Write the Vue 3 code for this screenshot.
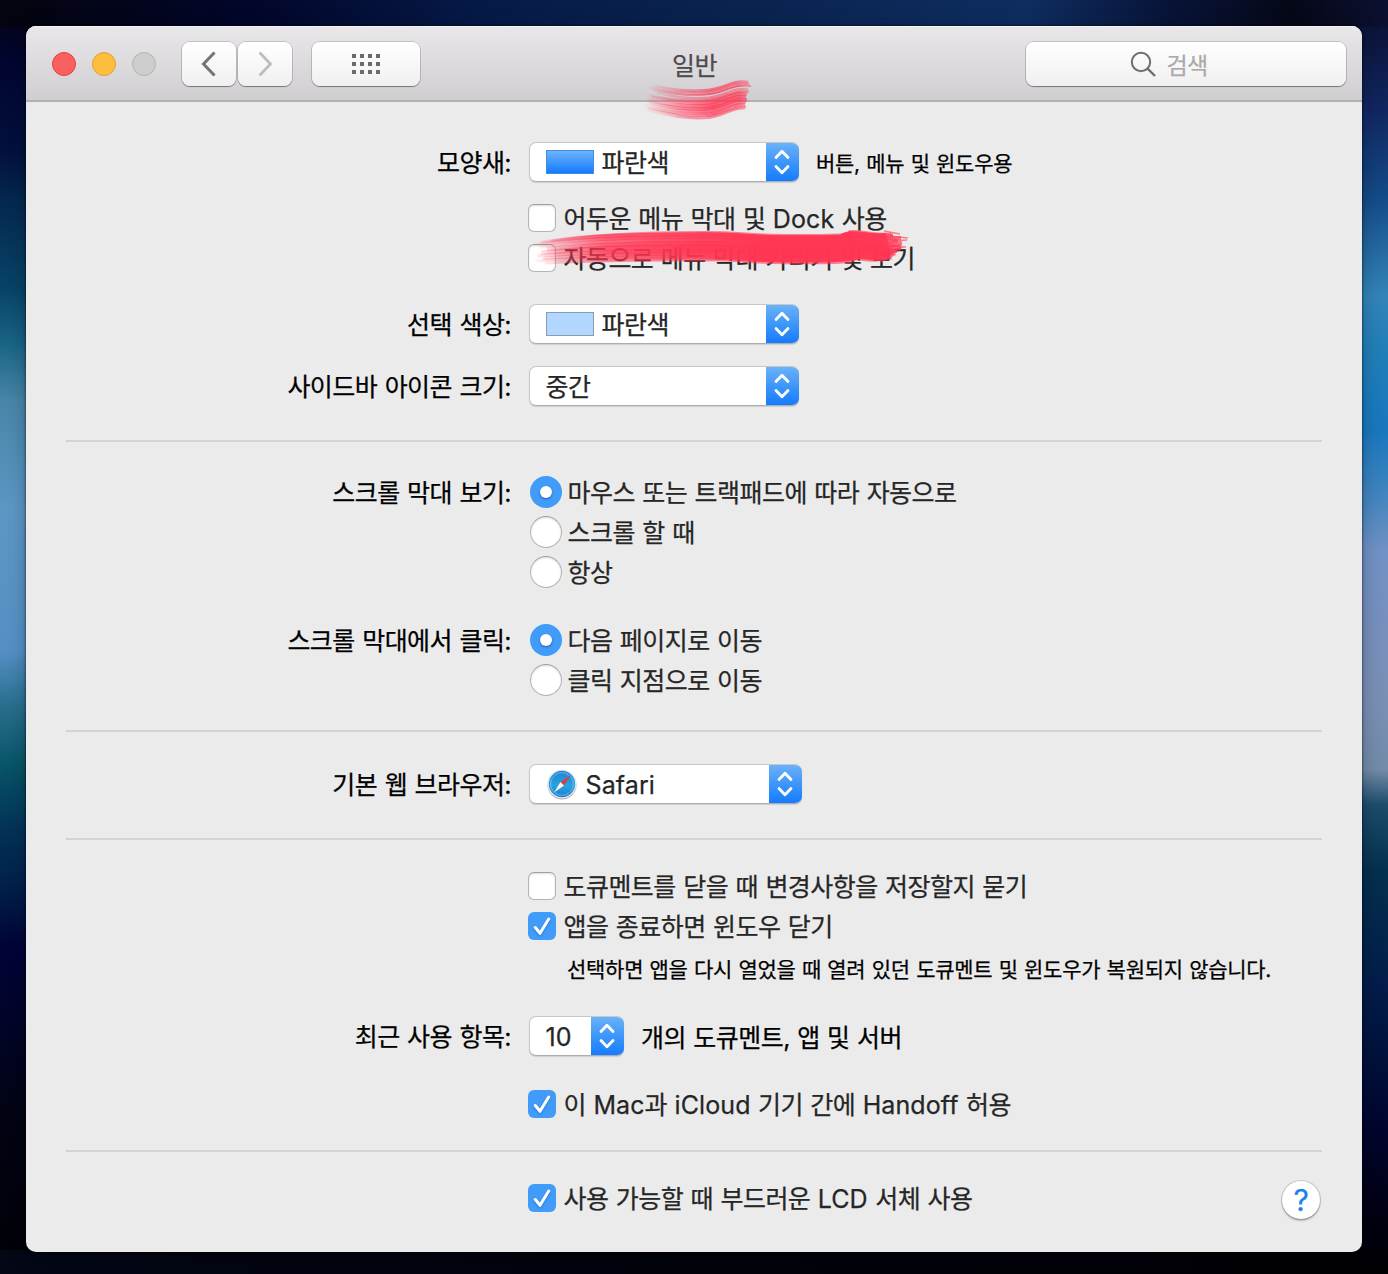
<script setup>
const rows = [
  { gap: 40, label: '모양새:', kind: 'select', width: 270, swatch: 'accent', value: '파란색', hint: '버튼, 메뉴 및 윈도우용' },
  { gap: 16, kind: 'check', text: '어두운 메뉴 막대 및 Dock 사용' },
  { gap: 0, kind: 'check', text: '자동으로 메뉴 막대 가리기 및 보기' },
  { gap: 26, label: '선택 색상:', kind: 'select', width: 270, swatch: 'light', value: '파란색' },
  { gap: 22, label: '사이드바 아이콘 크기:', kind: 'select', width: 270, value: '중간' },
  { gap: 34, kind: 'line' },
  { gap: 30, label: '스크롤 막대 보기:', kind: 'radio', on: true, text: '마우스 또는 트랙패드에 따라 자동으로' },
  { gap: 0, kind: 'radio', text: '스크롤 할 때' },
  { gap: 0, kind: 'radio', text: '항상' },
  { gap: 28, label: '스크롤 막대에서 클릭:', kind: 'radio', on: true, text: '다음 페이지로 이동' },
  { gap: 0, kind: 'radio', text: '클릭 지점으로 이동' },
  { gap: 30, kind: 'line' },
  { gap: 32, label: '기본 웹 브라우저:', kind: 'select', width: 273, safari: true, value: 'Safari' },
  { gap: 34, kind: 'line' },
  { gap: 26, kind: 'check', text: '도큐멘트를 닫을 때 변경사항을 저장할지 묻기' },
  { gap: 0, kind: 'check', on: true, text: '앱을 종료하면 윈도우 닫기' },
  { gap: 4, kind: 'note', text: '선택하면 앱을 다시 열었을 때 열려 있던 도큐멘트 및 윈도우가 복원되지 않습니다.' },
  { gap: 26, label: '최근 사용 항목:', kind: 'select', width: 95, value: '10', suffix: '개의 도큐멘트, 앱 및 서버' },
  { gap: 28, kind: 'check', on: true, text: '이 Mac과 iCloud 기기 간에 Handoff 허용' },
  { gap: 26, kind: 'line' },
  { gap: 26, kind: 'check', on: true, text: '사용 가능할 때 부드러운 LCD 서체 사용' },
]

// Latin words and numbers are set a little wider than the Hangul around them
const runs = (text) => text.split(/([A-Za-z0-9]+)/).filter(Boolean)
const isLatin = (run) => /^[A-Za-z0-9]+$/.test(run)

const dots = Array.from({ length: 12 }, (_, i) => ({ x: (i % 4) * 8, y: Math.floor(i / 4) * 8 }))
const ticks = Array.from({ length: 36 }, (_, i) => i * 10)

// Bristles of the two brush marks: vertical offset, start and end shift, width, opacity
const shortBristles = [
  [-14, 12, -2, 2.2, 0.6], [-12, 6, -1, 2.6, 0.65], [-9.5, 10, 1, 2, 0.8], [-6, 14, -2, 2.4, 0.5],
  [-3.5, 4, -1, 2.4, 0.7], [-1, 8, -3, 3.4, 0.75], [2, 3, -4, 3.8, 0.8], [5, 6, -3, 3.4, 0.85],
  [7.5, 2, -4, 2.8, 0.7], [10, 0, -5, 2.8, 0.75], [12.5, 5, -4, 2.2, 0.75], [14.5, 3, -5, 1.6, 0.55],
]
const longBristles = [
  [-14, 22, -12, 2, 0.6], [-12, 12, -10, 3.5, 0.8], [-9, 4, -2, 4, 0.85], [-6, 10, -5, 3, 0.7],
  [-3, 18, -1, 4.5, 0.85], [1, 12, -2, 5, 0.9], [5, 8, -6, 4, 0.9], [8, 14, -9, 3.5, 0.8],
  [11, 6, -14, 3.6, 0.75], [14, 16, -20, 2.4, 0.6],
]
const shortPath = ([dy, a, b]) =>
  `M${643 + a} ${98 + dy * 0.85} C${664 + a} ${102 + dy * 0.9} 682 ${105 + dy} 704 ${104 + dy} S730 ${93 + dy} ${750 + b} ${95 + dy * 0.95}`
const longPath = ([dy, a, b]) =>
  `M${529 + a} ${252 + dy * 0.8} C${575 + a} ${247 + dy} 660 ${246 + dy} 704 ${246 + dy} S750 ${250 + dy} 815 ${249 + dy} S838 ${245 + dy} 852 ${245 + dy} S876 ${249 + dy} ${903 + b} ${246 + dy * 0.9}`
</script>

<template>
  <div class="desktop">
    <main class="window">
      <header class="titlebar">
        <div class="lights"><i class="red"></i><i class="amber"></i><i class="gray"></i></div>
        <div class="nav">
          <button class="tool"><svg width="20" height="28" viewBox="0 0 20 28"><path d="M14.500 3.500 4.500 14l10 10.500" fill="none" stroke="#737373" stroke-width="3" stroke-linecap="square" /></svg></button>
          <button class="tool"><svg width="20" height="28" viewBox="0 0 20 28"><path d="M5.500 3.500l10 10.500-10 10.500" fill="none" stroke="#bdbdbd" stroke-width="2.800" stroke-linecap="square" /></svg></button>
        </div>
        <button class="tool grid-button">
          <svg width="28" height="20" viewBox="0 0 28 20"><rect v-for="(d, i) in dots" :key="i" :x="d.x" :y="d.y" width="4" height="4" fill="#6a6a6a" /></svg>
        </button>
        <h1>일반</h1>
        <div class="search">
          <svg width="27" height="27" viewBox="0 0 27 27" fill="none" stroke="#6d6d6d" stroke-width="2"><circle cx="11" cy="11" r="9.200" /><path d="M17.500 17.500l7.500 7.500" stroke-width="2.400" /></svg>
          <span>검색</span>
        </div>
      </header>

      <section class="form">
        <template v-for="(r, i) in rows" :key="i">
          <hr v-if="r.kind === 'line'" :style="{ marginTop: r.gap + 'px' }">
          <div v-else class="row" :style="{ marginTop: r.gap + 'px' }">
            <span class="label">{{ r.label }}</span>

            <template v-if="r.kind === 'select'">
              <div class="select" :style="{ width: r.width + 'px' }">
                <div class="value">
                  <i v-if="r.swatch" class="swatch" :class="r.swatch"></i>
                  <svg v-if="r.safari" class="safari" width="32" height="32" viewBox="0 0 32 32">
                    <defs><linearGradient id="sea" x2="0" y2="1"><stop stop-color="#2080d4" /><stop offset=".55" stop-color="#25a5e0" /><stop offset="1" stop-color="#1f7ad4" /></linearGradient></defs>
                    <circle cx="16" cy="17" r="14.500" fill="#aeb1b4" />
                    <circle cx="16" cy="16" r="14.500" fill="#e6e8ea" />
                    <circle cx="16" cy="16" r="13.200" fill="url(#sea)" />
                    <path v-for="t in ticks" :key="t" d="M16 3.800v1.600" stroke="#a9d6f2" stroke-width=".7" :transform="`rotate(${t} 16 16)`" />
                    <path d="M24.500 7.500 14.500 14 18 17.500z" fill="#e5383c" />
                    <path d="M8 24.500 14.500 14 18 17.500z" fill="#f4f7f8" />
                  </svg>
                  <span :class="{ latin: isLatin(r.value) }">{{ r.value }}</span>
                </div>
                <div class="arrows">
                  <svg width="16" height="26" viewBox="0 0 16 26" fill="none" stroke="#fff" stroke-width="2.800" stroke-linecap="round" stroke-linejoin="round"><path d="M2 8.500 8 2.200l6 6.300M2 17.500l6 6.300 6-6.300" /></svg>
                </div>
              </div>
              <span v-if="r.hint" class="hint">{{ r.hint }}</span>
              <span v-if="r.suffix" class="suffix">{{ r.suffix }}</span>
            </template>

            <label v-else-if="r.kind === 'check'" class="option">
              <i class="box" :class="{ on: r.on }">
                <svg v-if="r.on" width="28" height="28" viewBox="0 0 28 28" fill="none" stroke="#fff" stroke-width="3" stroke-linecap="round" stroke-linejoin="round"><path d="M7.300 15.500l4.700 5.800L20.700 7" /></svg>
              </i>
              <span><span v-for="(run, n) in runs(r.text)" :key="n" :class="{ latin: isLatin(run) }">{{ run }}</span></span>
            </label>

            <label v-else-if="r.kind === 'radio'" class="option">
              <i class="dot" :class="{ on: r.on }"></i>
              <span>{{ r.text }}</span>
            </label>

            <p v-else class="note">{{ r.text }}</p>

            <button v-if="i === rows.length - 1" class="help">?</button>
          </div>
        </template>
      </section>
    </main>

    <svg class="marks" width="1388" height="300" viewBox="0 0 1388 300" fill="none">
      <defs>
        <linearGradient id="fadeShort" gradientUnits="userSpaceOnUse" x1="643" x2="750" y1="0" y2="0"><stop stop-color="#ff3a58" stop-opacity="0" /><stop offset=".35" stop-color="#ff3a58" stop-opacity=".65" /><stop offset=".65" stop-color="#ff3553" /><stop offset=".9" stop-color="#ff3553" stop-opacity=".9" /><stop offset="1" stop-color="#ff3553" stop-opacity=".5" /></linearGradient>
        <linearGradient id="fadeLong" gradientUnits="userSpaceOnUse" x1="530" x2="910" y1="0" y2="0"><stop stop-color="#ff3553" stop-opacity="0" /><stop offset=".08" stop-color="#ff3553" stop-opacity=".4" /><stop offset=".2" stop-color="#ff3552" stop-opacity=".85" /><stop offset=".45" stop-color="#ff3552" /><stop offset=".95" stop-color="#ff3552" /><stop offset="1" stop-color="#ff3552" stop-opacity=".6" /></linearGradient>
        <linearGradient id="core" gradientUnits="userSpaceOnUse" x1="560" x2="900" y1="0" y2="0"><stop stop-color="#ff3552" stop-opacity="0" /><stop offset=".35" stop-color="#ff3552" stop-opacity=".55" /><stop offset=".6" stop-color="#ff3552" stop-opacity=".95" /><stop offset=".95" stop-color="#ff3552" stop-opacity=".9" /><stop offset="1" stop-color="#ff3552" stop-opacity=".5" /></linearGradient>
      </defs>
      <g class="soft">
        <path v-for="(b, i) in shortBristles" :key="'s' + i" :d="shortPath(b)" stroke="url(#fadeShort)" :stroke-width="b[3]" :opacity="b[4]" />
        <path :d="longPath([0, 12, -14])" stroke="url(#core)" stroke-width="27" />
        <path v-for="(b, i) in longBristles" :key="'l' + i" :d="longPath(b)" stroke="url(#fadeLong)" :stroke-width="b[3]" :opacity="b[4]" />
        <path d="M884 231l16 3M890 236l18 2M892 241l15-1M890 246l16 1M888 252l15-5M886 257l15-8M880 262l16-8" stroke="#ff3552" stroke-width="1.600" opacity=".6" />
      </g>
    </svg>
  </div>
</template>

<style>
body { margin: 0; background: #02030d; }
</style>

<style scoped>
* { box-sizing: border-box; }
.desktop {
  position: relative;
  width: 1388px;
  height: 1274px;
  padding: 26px;
  overflow: hidden;
  font: 25px/40px Inter, "Noto Sans CJK KR", sans-serif;
  letter-spacing: -0.55px;
  word-spacing: 0.95px;
  font-variant-ligatures: none;
  -webkit-text-stroke: 0.25px currentColor;
  color: #262626;
  background:
    linear-gradient(90deg, #04040e, #02062a 18%, #061a48 35%, #0a2450 55%, #0e2d60 74%, #081438 84%, #060818 93%, #0b1030) 0 0 / 100% 27px no-repeat,
    linear-gradient(90deg, #030716, #02040d 40%, #010105) 0 100% / 100% 24px no-repeat,
    linear-gradient(#04040e, #020530 60px, #02103d 150px, #04284f 200px, #084468 290px, #1a6585 345px, #4885a8 400px, #5c97c5 510px, #5590c5 650px, #29708f 705px, #085468 765px, #033258 830px, #021e4a 890px, #010438 945px, #020415 1110px, #010106) 0 0 / 50% 100% no-repeat,
    linear-gradient(#0a0e2a, #112661 110px, #144c88 200px, #3384b7 295px, #207fb8 350px, #1877bd 430px, #4586c0 500px, #7191c5 550px, #7b8fb5 700px, #718ba8 770px, #1c4c6b 805px, #04304f 870px, #021c49 990px, #01052e 1130px, #01010d 1230px) 100% 0 / 50% 100% no-repeat;
}
.window {
  height: 1226px;
  border-radius: 10px;
  overflow: hidden;
  background: #ebebeb;
  box-shadow: 0 0 3px rgba(0, 0, 0, .75), 0 4px 20px rgba(0, 0, 0, .25);
}
.titlebar {
  display: flex;
  align-items: center;
  height: 76px;
  padding: 2px 16px 0 26px;
  background: linear-gradient(#e9e7ea, #d1ced2);
  border-bottom: 2px solid #b3b0b4;
  box-shadow: inset 0 1px #f5f4f5;
}
.lights { display: flex; gap: 16px; }
.lights i { width: 24px; height: 24px; border-radius: 50%; border: 1px solid transparent; }
.lights .red { background: #fc605c; border-color: #e2443f; }
.lights .amber { background: #fdbd3e; border-color: #dfa033; }
.lights .gray { background: #cdcdcd; border-color: #b3b3b3; }
button { padding: 0; font: inherit; letter-spacing: inherit; }
.nav { display: flex; gap: 2px; margin: 0 20px 0 26px; }
.tool, .search {
  display: flex;
  align-items: center;
  justify-content: center;
  width: 54px;
  height: 44px;
  border: 0;
  border-radius: 8px;
  background: linear-gradient(#fff, #f1f0f1);
  box-shadow: 0 0 0 1px rgba(0, 0, 0, .14), 0 1px 1px rgba(0, 0, 0, .35);
}
.tool.grid-button { width: 108px; }
h1 {
  margin: 0 auto 0 0;
  padding: 4px 0 0 252px;
  font-size: 25px;
  font-weight: 400;
  color: #4c4c4c;
}
.search { width: 320px; gap: 9px; padding-right: 36px; color: #aaa; font-size: 23px; }
.search { padding-right: 35px; }
.search svg { margin-left: 1px; }
.search span { padding-top: 3px; }
.form { padding: 0 40px; }
hr { height: 2px; margin: 0; border: 0; background: #d4d4d4; }
.row { display: flex; align-items: center; height: 40px; white-space: nowrap; }
.label { width: 445px; margin-right: 18px; padding-top: 1px; text-align: right; color: #000; }
.latin { letter-spacing: 0.1px; }
.select {
  display: flex;
  height: 40px;
  border-radius: 7px;
  overflow: hidden;
  background: #fff;
  border: 1px solid #c7c7c7;
  border-bottom-color: #adadad;
  border-right: 0;
  box-shadow: 0 1px 1px rgba(0, 0, 0, .12);
}
.value { flex: 1; display: flex; align-items: center; padding-left: 16px; height: 38px; }
.value span { padding-top: 1px; margin-left: -0.5px; }
.swatch { width: 48px; height: 24px; margin-right: 8px; border: 1px solid #8a9cb0; background: #b2d7ff; }
.accent { border-color: #3d8ee5; background: linear-gradient(#6cb3fa, #147bff); }
.safari { margin-right: 8px; }
.arrows {
  display: flex;
  align-items: center;
  justify-content: center;
  width: 33px;
  height: 40px;
  margin-top: -1px;
  padding-right: 1px;
  background: linear-gradient(#6db3f9, #3f97f9 50%, #157bff);
  border-bottom: 1px solid #1668de;
}
.hint { margin-left: 17px; padding-top: 3px; font-size: 21px; letter-spacing: -0.27px; word-spacing: 0.7px; color: #000; }
.suffix { margin-left: 17px; padding-top: 4px; color: #000; }
.option { display: flex; align-items: center; }
.option > span { padding-top: 1px; margin-left: -0.5px; }
.box, .dot { flex: none; background: #fff; border: 1px solid #b5b5b5; border-top-color: #9f9f9f; box-shadow: inset 0 1px 2px rgba(0, 0, 0, .14); }
.box { width: 28px; height: 28px; margin: 0 8px 0 -1px; border-radius: 6px; }
.dot { display: flex; align-items: center; justify-content: center; width: 32px; height: 32px; margin: 0 6px 0 1px; border-radius: 50%; }
.box.on, .dot.on { border: 0; background: #419bf9; box-shadow: none; }
.box.on svg { display: block; filter: drop-shadow(0 1px 1px rgba(0, 60, 140, .4)); }
.dot.on::after { content: ""; width: 12px; height: 12px; border-radius: 50%; background: #fff; box-shadow: 0 1px 2px rgba(0, 50, 130, .6); }
.note { margin: 0 0 0 38px; font-size: 21px; letter-spacing: -0.27px; word-spacing: 0.7px; color: #000; }
.help {
  width: 38px;
  height: 38px;
  margin: 4px 2px 0 auto;
  border: 0;
  border-radius: 50%;
  background: #fff;
  box-shadow: 0 0 0 1px rgba(0, 0, 0, .16), 0 2px 2px rgba(0, 0, 0, .24);
  color: #1a80f0;
  font-size: 30px;
  line-height: 38px;
}
.marks { position: absolute; top: 0; left: 0; pointer-events: none; }
.soft { filter: blur(.5px); }
</style>
